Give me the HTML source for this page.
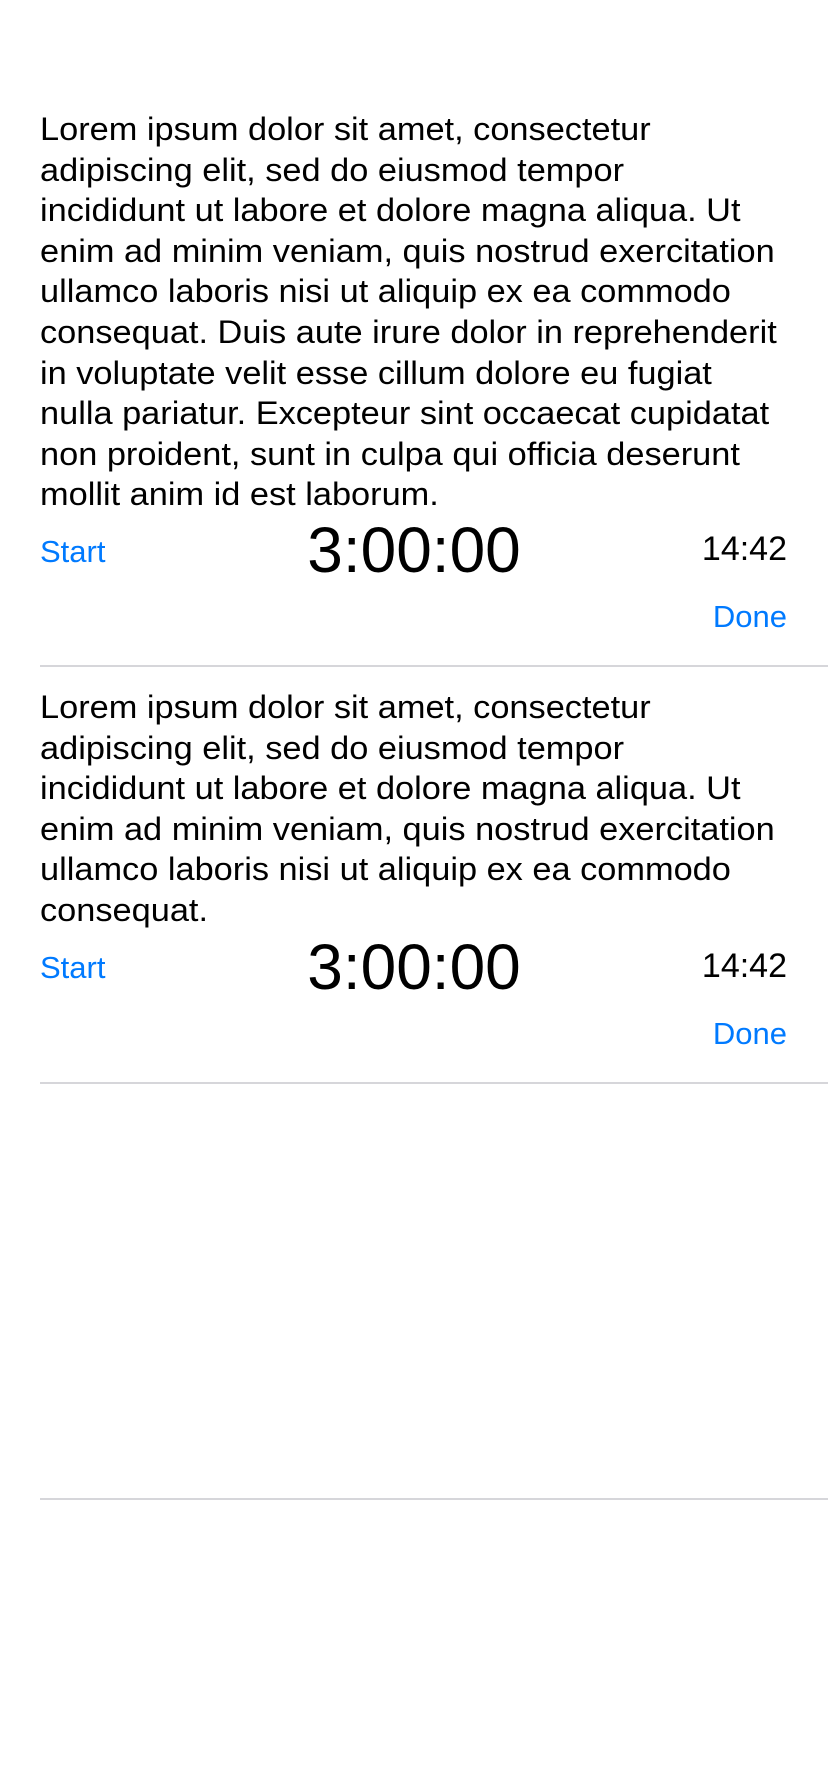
<!DOCTYPE html>
<html><head><style>
body{margin:0;width:828px;height:1792px;background:#fff;font-family:"Liberation Sans",sans-serif;position:relative;overflow:hidden;color:#000}
.p{position:absolute;left:40px;font-size:32px;line-height:40.6px;white-space:nowrap;transform:scaleX(1.073);transform-origin:0 0}
.a{position:absolute;white-space:nowrap;line-height:1}
.b{color:#007aff;font-size:31px}
.t{font-size:64px;left:0;width:828px;text-align:center}
.c{font-size:34px;right:41px}
.d{right:41px}
.s{position:absolute;left:40px;right:0;height:2px;background:#d6d6da}
</style></head><body>
<div class="p" style="top:109px">Lorem ipsum dolor sit amet, consectetur<br>adipiscing elit, sed do eiusmod tempor<br>incididunt ut labore et dolore magna aliqua. Ut<br>enim ad minim veniam, quis nostrud exercitation<br>ullamco laboris nisi ut aliquip ex ea commodo<br>consequat. Duis aute irure dolor in reprehenderit<br>in voluptate velit esse cillum dolore eu fugiat<br>nulla pariatur. Excepteur sint occaecat cupidatat<br>non proident, sunt in culpa qui officia deserunt<br>mollit anim id est laborum.</div>
<div class="a b" style="left:40px;top:536px">Start</div>
<div class="a t" style="top:518px">3:00:00</div>
<div class="a c" style="top:532px">14:42</div>
<div class="a b d" style="top:601px">Done</div>
<div class="s" style="top:665px"></div>

<div class="p" style="top:687px">Lorem ipsum dolor sit amet, consectetur<br>adipiscing elit, sed do eiusmod tempor<br>incididunt ut labore et dolore magna aliqua. Ut<br>enim ad minim veniam, quis nostrud exercitation<br>ullamco laboris nisi ut aliquip ex ea commodo<br>consequat.</div>
<div class="a b" style="left:40px;top:952px">Start</div>
<div class="a t" style="top:935px">3:00:00</div>
<div class="a c" style="top:949px">14:42</div>
<div class="a b d" style="top:1018px">Done</div>
<div class="s" style="top:1082px"></div>
<div class="s" style="top:1498px"></div>
</body></html>
